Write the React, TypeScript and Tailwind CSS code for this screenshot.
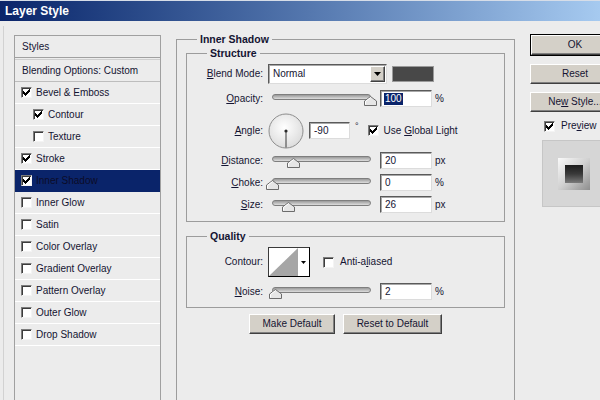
import React from "react";

const FONT = "font-['Liberation_Sans',Arial,sans-serif]";

const CHECK_PIXELS: [number, number][] = [
  [6, 0],
  [5, 1], [6, 1],
  [0, 2], [4, 2], [5, 2], [6, 2],
  [0, 3], [1, 3], [3, 3], [4, 3], [5, 3],
  [0, 4], [1, 4], [2, 4], [3, 4], [4, 4],
  [1, 5], [2, 5], [3, 5],
  [2, 6],
];

function Check({ checked, className = "" }: { checked?: boolean; className?: string }) {
  return (
    <span
      className={`relative inline-block w-[11px] h-[11px] shrink-0 bg-white border border-t-[#7c7c7c] border-l-[#7c7c7c] border-b-[#f4f4f4] border-r-[#f4f4f4] shadow-[inset_1px_1px_0_#3c3c3c] ${className}`}
    >
      {checked && (
        <svg className="absolute left-[1px] top-[1px]" width="7" height="7" viewBox="0 0 7 7">
          {CHECK_PIXELS.map(([x, y]) => (
            <rect key={`${x}-${y}`} x={x} y={y} width="1" height="1" fill="#000" />
          ))}
        </svg>
      )}
    </span>
  );
}

function Slider({ pos }: { pos: number }) {
  return (
    <div className="relative ml-[5px] w-[108px] h-[17px] shrink-0">
      <div className="absolute left-[4px] top-[4px] w-[99px] h-[6px] rounded-full border border-[#7e7e7e] bg-gradient-to-b from-[#9a9a9a] to-[#dedede]" />
      <svg className="absolute top-[6px]" style={{ left: pos - 6 }} width="13" height="10" viewBox="0 0 13 10">
        <path d="M0.5 9.5 V5 L6.5 0.5 L12.5 5 V9.5 Z" fill="#e6e6e6" stroke="#6c6c6c" />
        <path d="M1.5 8.5 V5.4 L6.5 1.7" fill="none" stroke="#ffffff" />
      </svg>
    </div>
  );
}

function Field({
  value,
  width = "w-[52px]",
  selected,
  className = "",
}: {
  value: string;
  width?: string;
  selected?: boolean;
  className?: string;
}) {
  return (
    <div
      className={`${width} h-[17px] shrink-0 bg-white border border-t-[#5a5a5a] border-l-[#5a5a5a] border-r-[#dcdcdc] border-b-[#dcdcdc] shadow-[inset_1px_1px_0_#a8a8a8] flex items-center pl-[3px] ${className}`}
    >
      {selected ? (
        <span className="bg-[#0a246a] text-white px-[1px] leading-[12px]">{value}</span>
      ) : (
        <span className="pl-[1px]">{value}</span>
      )}
    </div>
  );
}

function Label({ children }: { children: React.ReactNode }) {
  return <div className="w-[76px] shrink-0 text-right">{children}</div>;
}

function SliderRow({
  label,
  pos,
  value,
  unit,
  selected,
  className = "",
}: {
  label: React.ReactNode;
  pos: number;
  value: string;
  unit: string;
  selected?: boolean;
  className?: string;
}) {
  return (
    <div className={`flex items-center h-[17px] ${className}`}>
      <Label>{label}</Label>
      <Slider pos={pos} />
      <Field value={value} selected={selected} className="ml-[4px]" />
      <span className="ml-[3px]">{unit}</span>
    </div>
  );
}

function Button({ children, className = "" }: { children: React.ReactNode; className?: string }) {
  return (
    <div
      className={`h-[20px] bg-[#d4d0c8] border border-t-white border-l-white border-r-[#404040] border-b-[#404040] shadow-[inset_-1px_-1px_0_#808080] flex items-center justify-center ${className}`}
    >
      {children}
    </div>
  );
}

function StyleRow({
  label,
  checked,
  indent,
  active,
}: {
  label: string;
  checked?: boolean;
  indent?: boolean;
  active?: boolean;
}) {
  return (
    <div
      className={`h-[22px] flex items-center border-b ${
        active ? "bg-[#0a246a] border-[#0a246a] text-[#0c0c28]" : "border-white"
      } ${indent ? "pl-[18px]" : "pl-[6px]"}`}
    >
      <Check checked={checked} />
      <span className="ml-[4px]">{label}</span>
    </div>
  );
}

function StylesPanel() {
  const rows: { label: string; checked?: boolean; indent?: boolean; active?: boolean }[] = [
    { label: "Bevel & Emboss", checked: true },
    { label: "Contour", checked: true, indent: true },
    { label: "Texture", indent: true },
    { label: "Stroke", checked: true },
    { label: "Inner Shadow", checked: true, active: true },
    { label: "Inner Glow" },
    { label: "Satin" },
    { label: "Color Overlay" },
    { label: "Gradient Overlay" },
    { label: "Pattern Overlay" },
    { label: "Outer Glow" },
    { label: "Drop Shadow" },
  ];
  return (
    <div className="w-[147px] h-[380px] border border-[#a0a0a0] border-b-0">
      <div className="h-[22px] flex items-center pl-[7px] border-b border-[#a0a0a0]">Styles</div>
      <div className="mt-[1px] h-[23px] flex items-center pl-[7px] border-t border-t-[#cfcfcf] border-b border-b-[#bdbdbd]">
        Blending Options: Custom
      </div>
      {rows.map((r) => (
        <StyleRow key={r.label} {...r} />
      ))}
    </div>
  );
}

function Legend({ children }: { children: React.ReactNode }) {
  return <legend className="ml-[20px] px-[3px] font-bold text-[10.5px] leading-[14px]">{children}</legend>;
}

export default function App() {
  return (
    <div
      className={`w-[600px] h-[400px] overflow-hidden bg-[#ececec] ${FONT} text-[10px] leading-none text-[#141432] flex flex-col`}
    >
      <div className="h-[21px] shrink-0 bg-gradient-to-r from-[#0a246a] to-[#a6caf0] border-t border-[#d6dde8] flex items-center pl-[5px]">
        <span className="text-white font-bold text-[12px]">Layer Style</span>
      </div>

      <div className="flex items-start flex-1 min-h-0">
        <div className="ml-[3px] mt-[5px] self-stretch border-l border-[#d2d2d2] pl-[10px] pt-[9px]">
          <StylesPanel />
        </div>

        <fieldset className="ml-[15px] mt-[11px] w-[339px] h-[380px] shrink-0 border border-[#9c9c9c] min-w-0">
          <Legend>Inner Shadow</Legend>

          <fieldset className="mx-[9px] border border-[#9c9c9c] min-w-0">
            <Legend>Structure</Legend>
            <div className="pt-[4px] pb-[8px] flex flex-col">
              <div className="flex items-center h-[20px]">
                <Label>
                  <u className="underline-offset-1">B</u>lend Mode:
                </Label>
                <div className="ml-[5px] w-[119px] h-[20px] shrink-0 bg-white border border-t-[#5a5a5a] border-l-[#5a5a5a] border-r-[#dcdcdc] border-b-[#dcdcdc] shadow-[inset_1px_1px_0_#a8a8a8] flex items-center">
                  <span className="pl-[4px] flex-1">Normal</span>
                  <div className="w-[15px] h-[16px] mr-[1px] bg-[#d4d0c8] border border-t-white border-l-white border-r-[#404040] border-b-[#404040] shadow-[inset_-1px_-1px_0_#808080] flex items-center justify-center">
                    <svg width="7" height="4" viewBox="0 0 7 4">
                      <polygon points="0,0 7,0 3.5,4" fill="#000" />
                    </svg>
                  </div>
                </div>
                <div className="ml-[5px] w-[42px] h-[16px] shrink-0 bg-[#484848] border border-[#9a9a9a]" />
              </div>

              <SliderRow
                className="mt-[6px]"
                label={
                  <>
                    <u className="underline-offset-1">O</u>pacity:
                  </>
                }
                pos={102}
                value="100"
                unit="%"
                selected
              />

              <div className="mt-[6px] flex items-center h-[35px]">
                <Label>
                  <u className="underline-offset-1">A</u>ngle:
                </Label>
                <svg width="36" height="36" viewBox="0 0 36 36" className="ml-[5px] shrink-0">
                  <defs>
                    <radialGradient id="angleFill" cx="45%" cy="40%" r="65%">
                      <stop offset="0" stopColor="#ffffff" />
                      <stop offset="1" stopColor="#dadada" />
                    </radialGradient>
                  </defs>
                  <circle cx="18" cy="18" r="17" fill="url(#angleFill)" stroke="#8e8e8e" />
                  <line x1="18" y1="18" x2="18" y2="34.5" stroke="#3a3a3a" strokeWidth="1" />
                  <circle cx="18" cy="18" r="1.6" fill="#2a2a2a" />
                </svg>
                <Field value="-90" width="w-[41px]" className="ml-[5px]" />
                <span className="ml-[5px] self-start mt-[9px] text-[9px]">°</span>
                <Check checked className="ml-[9px]" />
                <span className="ml-[5px]">
                  Use <u className="underline-offset-1">G</u>lobal Light
                </span>
              </div>

              <SliderRow
                className="mt-[4px]"
                label={
                  <>
                    <u className="underline-offset-1">D</u>istance:
                  </>
                }
                pos={25}
                value="20"
                unit="px"
              />
              <SliderRow
                className="mt-[5px]"
                label={
                  <>
                    <u className="underline-offset-1">C</u>hoke:
                  </>
                }
                pos={4}
                value="0"
                unit="%"
              />
              <SliderRow
                className="mt-[5px]"
                label={
                  <>
                    <u className="underline-offset-1">S</u>ize:
                  </>
                }
                pos={20}
                value="26"
                unit="px"
              />
            </div>
          </fieldset>

          <fieldset className="mt-[7px] mx-[9px] border border-[#9c9c9c] min-w-0">
            <Legend>Quality</Legend>
            <div className="pt-[4px] pb-[7px] flex flex-col">
              <div className="flex items-center h-[30px]">
                <Label>Contour:</Label>
                <div className="ml-[5px] w-[42px] h-[30px] shrink-0 border border-t-[#3a3a3a] border-l-[#3a3a3a] border-r-black border-b-black bg-white flex">
                  <svg width="29" height="28" viewBox="0 0 29 28">
                    <polygon points="0,28 29,0 29,28" fill="#a6a6a6" />
                  </svg>
                  <div className="flex-1 flex items-center justify-center">
                    <svg width="5" height="3" viewBox="0 0 5 3">
                      <polygon points="0,0 5,0 2.5,3" fill="#000" />
                    </svg>
                  </div>
                </div>
                <Check className="ml-[13px]" />
                <span className="ml-[6px]">
                  Anti-a<u className="underline-offset-1">l</u>iased
                </span>
              </div>
              <SliderRow
                className="mt-[6px]"
                label={
                  <>
                    <u className="underline-offset-1">N</u>oise:
                  </>
                }
                pos={7}
                value="2"
                unit="%"
              />
            </div>
          </fieldset>

          <div className="mt-[6px] flex justify-center gap-[8px]">
            <Button className="w-[86px]">Make Default</Button>
            <Button className="w-[99px]">Reset to Default</Button>
          </div>
        </fieldset>

        <div className="ml-[15px] mt-[13px] w-[90px] shrink-0 flex flex-col">
          <div className="border border-black">
            <Button className="h-[18px]">OK</Button>
          </div>
          <Button className="mt-[8px]">Reset</Button>
          <Button className="mt-[8px] whitespace-nowrap">
            Ne<u className="underline-offset-1">w</u>&nbsp;Style...
          </Button>
          <div className="mt-[8px] ml-[14px] h-[12px] flex items-center">
            <Check checked />
            <span className="ml-[6px]">
              Pre<u className="underline-offset-1">v</u>iew
            </span>
          </div>
          <div className="mt-[8px] ml-[12px] w-[64px] h-[67px] bg-[#d6d6d6] border border-[#c6c6c6] flex items-center justify-center">
            <div className="w-[32px] h-[32px] bg-gradient-to-br from-[#fafafa] via-[#d0d0d0] to-[#8e8e8e] flex items-center justify-center">
              <div className="w-[18px] h-[18px] bg-gradient-to-b from-[#1c1c1c] via-[#3a3a3a] to-[#7a7a7a]" />
            </div>
          </div>
        </div>
      </div>
    </div>
  );
}
